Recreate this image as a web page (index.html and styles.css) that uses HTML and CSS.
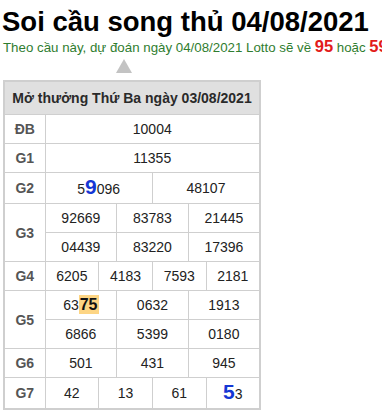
FILE: index.html
```html
<!DOCTYPE html>
<html lang="vi">
<head>
  <meta charset="UTF-8">
  <title>Soi cầu song thủ 04/08/2021</title>
  <link rel="stylesheet" href="styles.css">
</head>
<body>

  <h1>Soi cầu song thủ 04/08/2021</h1>
  <p class="predict">Theo cầu này, dự đoán ngày 04/08/2021 Lotto sẽ về <b>95</b> hoặc <b>59</b></p>

  <div class="arrow"></div>

  <table class="kq">
    <colgroup>
      <col class="col-label">
      <col><col><col><col><col><col><col><col><col><col><col><col>
    </colgroup>
    <tr>
      <th colspan="13" class="head">Mở thưởng Thứ Ba ngày 03/08/2021</th>
    </tr>
    <tr>
      <td class="label">ĐB</td>
      <td colspan="12">10004</td>
    </tr>
    <tr>
      <td class="label">G1</td>
      <td colspan="12">11355</td>
    </tr>
    <tr>
      <td class="label">G2</td>
      <td colspan="6">5<span class="hit">9</span>096</td>
      <td colspan="6">48107</td>
    </tr>
    <tr>
      <td class="label" rowspan="2">G3</td>
      <td colspan="4">92669</td>
      <td colspan="4">83783</td>
      <td colspan="4">21445</td>
    </tr>
    <tr>
      <td colspan="4">04439</td>
      <td colspan="4">83220</td>
      <td colspan="4">17396</td>
    </tr>
    <tr>
      <td class="label">G4</td>
      <td colspan="3">6205</td>
      <td colspan="3">4183</td>
      <td colspan="3">7593</td>
      <td colspan="3">2181</td>
    </tr>
    <tr>
      <td class="label" rowspan="2">G5</td>
      <td colspan="4">63<span class="pair">75</span></td>
      <td colspan="4">0632</td>
      <td colspan="4">1913</td>
    </tr>
    <tr>
      <td colspan="4">6866</td>
      <td colspan="4">5399</td>
      <td colspan="4">0180</td>
    </tr>
    <tr>
      <td class="label">G6</td>
      <td colspan="4">501</td>
      <td colspan="4">431</td>
      <td colspan="4">945</td>
    </tr>
    <tr>
      <td class="label">G7</td>
      <td colspan="3">42</td>
      <td colspan="3">13</td>
      <td colspan="3">61</td>
      <td colspan="3"><span class="hit">5</span>3</td>
    </tr>
  </table>

</body>
</html>
```

FILE: styles.css
```css
body {
  margin: 0;
  padding: 0 0 0 2px;
  font-family: "Liberation Sans", Arial, sans-serif;
  background: #fff;
  color: #222;
}
h1 {
  margin: 0;
  padding-top: 6px;
  font-size: 27.5px;
  line-height: 32px;
  color: #000;
  white-space: nowrap;
}
.predict {
  margin: 0;
  padding-left: 1px;
  font-size: 13.3px;
  line-height: 17px;
  color: #2f7d2f;
  white-space: nowrap;
}
.predict b {
  color: #e21b1b;
  font-size: 16.5px;
}
.arrow {
  width: 0;
  height: 0;
  margin: 3px 0 7px 114px;
  border-left: 8px solid transparent;
  border-right: 8px solid transparent;
  border-bottom: 14px solid #c3c3c3;
}
.kq {
  margin-left: 1px;
  width: 258px;
  table-layout: fixed;
  border-collapse: collapse;
  border: 2px solid #cfcfcf;
}
.col-label {
  width: 41px;
}
.kq th, .kq td {
  border: 1px solid #cfcfcf;
  text-align: center;
  font-size: 14px;
  padding: 5px 0;
  line-height: 18px;
  white-space: nowrap;
}
.head {
  background: #e0e0e0;
  font-weight: bold;
  height: 32px;
  padding: 0 !important;
  color: #2a2a2a;
}
.label {
  font-weight: bold;
  font-size: 14px !important;
  color: #555;
}
.hit {
  color: #1537d4;
  font-weight: bold;
  font-size: 21px;
}
.pair {
  background: #fdd584;
  font-weight: bold;
  font-size: 16px;
  color: #111;
  padding: 1px 1px;
}
```
